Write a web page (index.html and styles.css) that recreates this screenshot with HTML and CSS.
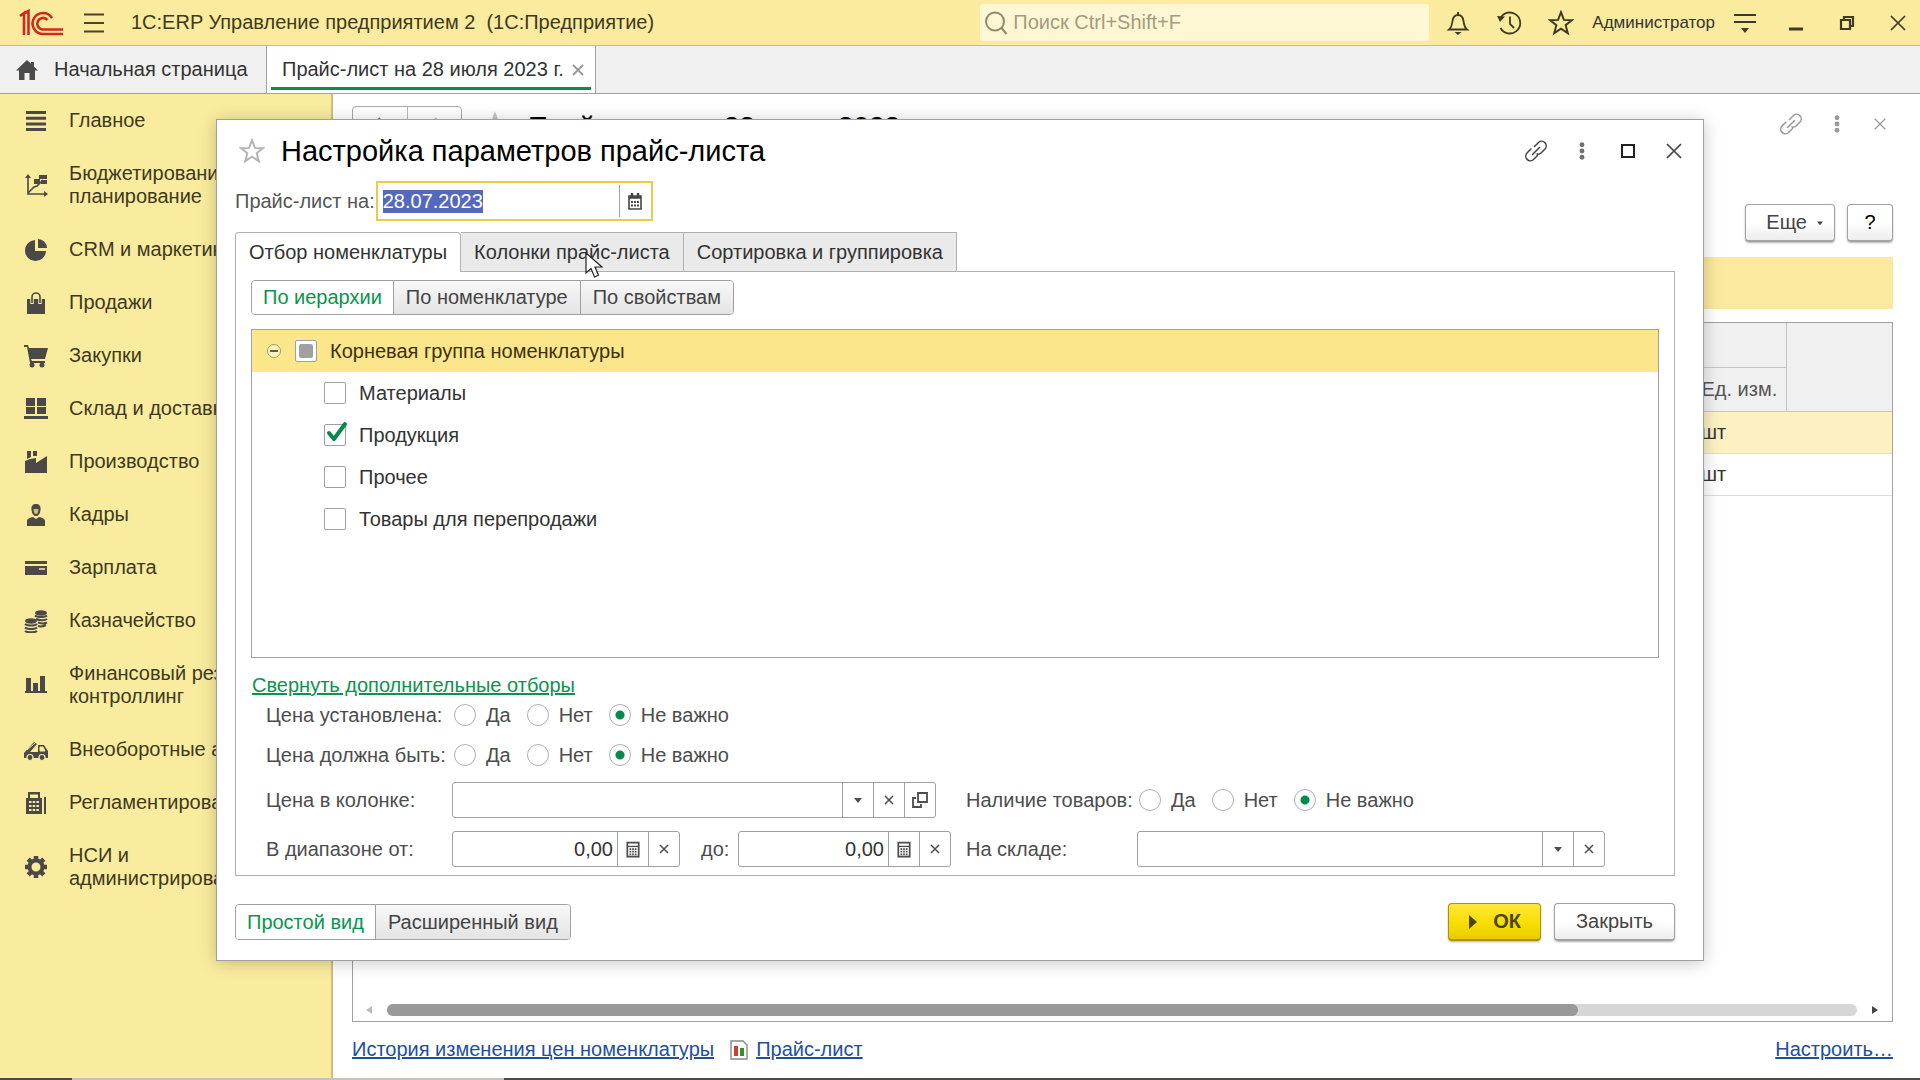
FILE: index.html
```html
<!DOCTYPE html>
<html lang="ru">
<head>
  <meta charset="UTF-8">
  <meta name="viewport" content="width=device-width, initial-scale=1">
  <title>1С:ERP Управление предприятием 2</title>
  <link rel="stylesheet" href="styles.css">
</head>
<body>
  <!-- Общие иконки -->
  <svg class="sprite" aria-hidden="true">
    <symbol id="i-link" viewBox="0 0 24 24"><g fill="none" stroke="currentColor" stroke-width="1.500" stroke-linecap="round"><path d="M10.500 7.500l4-4a4.600 4.600 0 0 1 6.500 6.500l-4 4c-1 1-2.500 1.400-4 1"/><path d="M13.500 16.500l-4 4a4.600 4.600 0 0 1-6.500-6.500l4-4"/><path d="M8.500 15.500l7-7"/></g></symbol>
    <symbol id="i-dots" viewBox="0 0 24 24"><g fill="currentColor"><circle cx="12" cy="4.500" r="2.900"/><circle cx="12" cy="12" r="2.900"/><circle cx="12" cy="19.500" r="2.900"/></g></symbol>
    <symbol id="i-close" viewBox="0 0 24 24"><path d="M5 5l14 14M19 5L5 19" fill="none" stroke="currentColor" stroke-width="1.700"/></symbol>
    <symbol id="i-star" viewBox="0 0 24 24"><path d="M12 2l2.700 7.100 7.300.3-5.700 4.600 2 7.400-6.300-4.200-6.300 4.200 2-7.400L2 9.400l7.300-.3z" fill="none" stroke="currentColor" stroke-width="1.800"/></symbol>
    <symbol id="i-x" viewBox="0 0 16 16"><path d="M4 4l8 8M12 4l-8 8" fill="none" stroke="currentColor" stroke-width="1.500"/></symbol>
    <symbol id="i-down" viewBox="0 0 16 16"><path d="M4 6h8l-4 5z" fill="currentColor"/></symbol>
    <symbol id="i-calc" viewBox="0 0 16 18"><path d="M1.500 1h13v16h-13z" fill="none" stroke="currentColor" stroke-width="2"/><path d="M2 5.500h12" stroke="currentColor" stroke-width="1.500"/><path d="M4 8.500h8M4 11.500h8M4 14.500h8" stroke="currentColor" stroke-width="2" stroke-dasharray="2 1"/></symbol>
  </svg>

  <header class="topbar">
    <svg class="logo" viewBox="0 0 44 28" role="img" aria-label="1С"><g fill="none" stroke="#d3281c"><path d="M1 7l4-3v22M9.500 26V2L5 4.500" stroke-width="2.600"/><path d="M33 9a10.500 10.500 0 1 0-9.500 16H44" stroke-width="2.600"/><path d="M28.500 11a5.800 5.800 0 1 0-5 9.500H44" stroke-width="2.600"/></g></svg>
    <button class="icon-btn" aria-label="Меню"><svg width="24" height="24" viewBox="0 0 24 24"><path d="M2 3.500h20M2 12h20M2 20.500h20" stroke="#4a4326" stroke-width="2"/></svg></button>
    <span class="app-title">1С:ERP Управление предприятием 2&nbsp; (1С:Предприятие)</span>
    <label class="search">
      <svg width="24" height="24" viewBox="0 0 24 24"><g fill="none" stroke="#8f886b" stroke-width="2"><circle cx="11" cy="10.500" r="9"/><path d="M17.500 17l5 6"/></g></svg>
      <input type="search" placeholder="Поиск Ctrl+Shift+F" aria-label="Поиск">
    </label>
    <div class="top-icons">
      <button class="icon-btn" aria-label="Уведомления"><svg width="24" height="24" viewBox="0 0 24 24"><path d="M3 18.500c2.500-2 3-4.500 3.500-8.500C7 6.500 9 4 12 4s5 2.500 5.500 6c.5 4 1 6.500 3.500 8.500z" fill="none" stroke="currentColor" stroke-width="1.800"/><path d="M11 1h2v3h-2zM8.500 21h7L12 24z" fill="currentColor"/></svg></button>
      <button class="icon-btn" aria-label="История"><svg width="26" height="26" viewBox="0 0 26 26"><path d="M4.500 8a10.500 10.500 0 1 1 0 10M14 6.500V14l4 4" fill="none" stroke="currentColor" stroke-width="1.800"/><path d="M1 6l8 .5-5 5.500z" fill="currentColor"/></svg></button>
      <button class="icon-btn" aria-label="Избранное"><svg width="26" height="26"><use href="#i-star"/></svg></button>
    </div>
    <span class="user">Администратор</span>
    <div class="win-icons">
      <button class="icon-btn" aria-label="Настройки"><svg width="24" height="24" viewBox="0 0 24 24"><path d="M1 4h22M1 11h22" stroke="currentColor" stroke-width="2"/><path d="M8 17h8l-4 5z" fill="currentColor"/></svg></button>
      <button class="icon-btn" aria-label="Свернуть"><svg width="24" height="24" viewBox="0 0 24 24"><path d="M5 18h14" stroke="currentColor" stroke-width="3"/></svg></button>
      <button class="icon-btn" aria-label="Восстановить"><svg width="24" height="24" viewBox="0 0 24 24"><path d="M9 9V6h9v9h-3M6 9h9v9H6z" fill="none" stroke="currentColor" stroke-width="2.200"/></svg></button>
      <button class="icon-btn" aria-label="Закрыть"><svg width="24" height="24"><use href="#i-close"/></svg></button>
    </div>
  </header>

  <nav class="tabs">
    <a href="#" class="tab home"><svg width="22" height="20" viewBox="0 0 22 20"><path d="M11 0l4 3.700V2h3v4.500l4 4h-3V20h-5.500v-7h-5v7H3v-9.500H0z" fill="#4a4a4a"/></svg>Начальная страница</a>
    <a href="#" class="tab current">Прайс-лист на 28 июля 2023 г.<svg width="20" height="20"><use href="#i-x"/></svg></a>
  </nav>

  <div class="workspace">
    <nav class="sidebar">
      <a href="#"><svg viewBox="0 0 24 24"><path d="M2 3.500h20M2 9.200h20M2 14.900h20M2 20.600h20" stroke="currentColor" stroke-width="3"/></svg><span>Главное</span></a>
      <a href="#"><svg viewBox="0 0 24 24"><path d="M4 3v18h18M4 20l6-6 3-1 6-6" fill="none" stroke="currentColor" stroke-width="1.600"/><path d="M1 5l3-4 3 4zM20 18l4 3-4 3zM10 6h6v5h-6zM15 2h8v4h-8zM17 7h6v4h-6z" fill="currentColor"/></svg><span>Бюджетирование и планирование</span></a>
      <a href="#"><svg viewBox="0 0 24 24"><path d="M11 2v11h11A10.500 10.500 0 1 1 11 2z" fill="currentColor"/><path d="M14 1a9 9 0 0 1 9 9h-9z" fill="currentColor"/></svg><span>CRM и маркетинг</span></a>
      <a href="#"><svg viewBox="0 0 24 24"><path d="M3 8h18v15H3z" fill="currentColor"/><path d="M8 13V6a4 4 0 0 1 8 0v7" fill="none" stroke="#faec9e" stroke-width="3.500"/><path d="M8 12V6a4 4 0 0 1 8 0v6" fill="none" stroke="currentColor" stroke-width="1.600"/></svg><span>Продажи</span></a>
      <a href="#"><svg viewBox="0 0 24 24"><path d="M0 1h4l1 3h19l-3 11H7l1 2h13v2H6L3 3H0z" fill="currentColor"/><circle cx="8" cy="21" r="2.500" fill="currentColor"/><circle cx="18" cy="21" r="2.500" fill="currentColor"/></svg><span>Закупки</span></a>
      <a href="#"><svg viewBox="0 0 24 24"><path d="M2 1h9v8H2zM13 1h9v8h-9zM2 10h9v7H2zM13 10h9v7h-9zM0 19h24v3H0z" fill="currentColor"/></svg><span>Склад и доставка</span></a>
      <a href="#"><svg viewBox="0 0 24 24"><path d="M1 23V11l5-2 6-1v5l11-7v17zM3 1h4v6l-4 2zM9 1h4v5H9z" fill="currentColor"/></svg><span>Производство</span></a>
      <a href="#"><svg viewBox="0 0 24 24"><path d="M12 1c4 0 5 3 4.500 6-.5 4-2 6-4.500 6s-4-2-4.500-6C7 4 8 1 12 1zM3 23v-5c0-2 3-3.500 6-4l3 2 3-2c3 .5 6 2 6 4v5z" fill="currentColor"/><path d="M9.500 6h5c0 3-1 5-2.500 5s-2.500-2-2.500-5z" fill="#c9bd83"/></svg><span>Кадры</span></a>
      <a href="#"><svg viewBox="0 0 24 24"><path d="M1 5h22v3H1zM1 10h22v9H1z" fill="currentColor"/><path d="M15 13h6" stroke="#faec9e" stroke-width="1.500"/></svg><span>Зарплата</span></a>
      <a href="#"><svg viewBox="0 0 24 24"><g fill="currentColor"><ellipse cx="17" cy="4" rx="6" ry="2.700"/><ellipse cx="7" cy="12" rx="6" ry="2.700"/></g><g fill="none" stroke="currentColor" stroke-width="2"><path d="M11 6.500c2 2 10 2 12 0M12 10c3 1.500 9 1.500 11 0M14 13.500c3 1 7 1 9 0M14 17c3 1 6 0 8-1M1 15c2 2 10 2 12 0M1 18.500c2 2 10 2 12 0M1 22c2 1.700 10 1.700 12 0"/></g></svg><span>Казначейство</span></a>
      <a href="#"><svg viewBox="0 0 24 24"><path d="M2 5h5v14H2zM9 10h5v9H9zM16 3h5v16h-5zM1 18h22v2H1z" fill="currentColor"/></svg><span>Финансовый результат и контроллинг</span></a>
      <a href="#"><svg viewBox="0 0 24 24"><path d="M0 15L10 4l3 2-7 8h8V7h6l4 6v7H0z" fill="currentColor"/><path d="M16 9h3l2 4h-5zM3 12l8-7" fill="#faec9e" stroke="#faec9e"/><g fill="currentColor" stroke="#faec9e" stroke-width="1.200"><circle cx="6" cy="19.500" r="3"/><circle cx="18" cy="19.500" r="3"/></g></svg><span>Внеоборотные активы</span></a>
      <a href="#"><svg viewBox="0 0 24 24"><path d="M4 1h12v6h2v16H2V7h2zM20 6h2v17h-2z" fill="currentColor"/><path d="M6 3.500h8V7H6z" fill="#faec9e"/><path d="M5 11h10M5 15h10M5 19h10" stroke="#faec9e" stroke-width="2" stroke-dasharray="2.500 1.200"/></svg><span>Регламентированный учет</span></a>
      <a href="#"><svg viewBox="0 0 24 24"><circle cx="12" cy="12" r="6.500" fill="none" stroke="currentColor" stroke-width="4"/><path d="M12 1v4M12 19v4M1 12h4M19 12h4M4.200 4.200l3 3M16.800 16.800l3 3M4.200 19.800l3-3M16.800 7.200l3-3" stroke="currentColor" stroke-width="4.500"/></svg><span>НСИ и<br>администрирование</span></a>
    </nav>

    <main class="page">
      <div class="page-head">
        <div class="nav-buttons">
          <button aria-label="Назад"><svg width="18" height="18" viewBox="0 0 18 18"><path d="M9 3L3 9l6 6M3 9h13" fill="none" stroke="#777" stroke-width="2"/></svg></button>
          <button aria-label="Вперед"><svg width="18" height="18" viewBox="0 0 18 18"><path d="M9 3l6 6-6 6M15 9H2" fill="none" stroke="#bbb" stroke-width="2"/></svg></button>
        </div>
        <svg class="head-star" width="28" height="28" viewBox="0 0 24 24"><path d="M12 1l3 8 8 .4-6 5 2 8-7-4.500-7 4.500 2-8-6-5L9 9z" fill="#c4c4c4"/></svg>
        <h1>Прайс-лист на 28 июля 2023</h1>
        <div class="head-tools">
          <svg width="24" height="24"><use href="#i-link"/></svg>
          <svg width="20" height="20"><use href="#i-dots"/></svg>
          <svg width="18" height="18"><use href="#i-close"/></svg>
        </div>
      </div>
      <div class="commands">
        <button class="btn more">Еще<svg width="12" height="12"><use href="#i-down"/></svg></button>
        <button class="btn help">?</button>
      </div>
      <div class="notice"></div>
      <div class="list">
        <table>
          <thead>
            <tr><th class="wide"></th><th class="unit"></th><th class="rest" rowspan="2"></th></tr>
            <tr><th></th><th>Ед. изм.</th></tr>
          </thead>
          <tbody>
            <tr class="selected"><td></td><td>шт</td><td></td></tr>
            <tr><td></td><td>шт</td><td></td></tr>
          </tbody>
        </table>
        <div class="scroll">
          <svg width="10" height="10" viewBox="0 0 10 10"><path d="M8 1v8L2 5z" fill="#bbb"/></svg>
          <div class="track"><div class="thumb"></div></div>
          <svg width="10" height="10" viewBox="0 0 10 10"><path d="M2 1v8l6-4z" fill="#444"/></svg>
        </div>
      </div>
      <footer class="links">
        <a href="#">История изменения цен номенклатуры</a>
        <svg width="18" height="20" viewBox="0 0 18 20"><path d="M1 1h12l4 4v14H1z" fill="#fff" stroke="#888" stroke-width="1.400"/><path d="M4 6h4v10H4z" fill="#d23b30"/><path d="M10 8h4v8h-4z" fill="#3d8a2c"/></svg>
        <a href="#">Прайс-лист</a>
        <a href="#" class="setup">Настроить…</a>
      </footer>
    </main>
  </div>
  <div class="edge"><div></div></div>

  <!-- Окно настройки -->
  <form class="dialog" role="dialog" aria-labelledby="dlgTitle">
    <div class="dialog-head">
      <svg class="star" width="26" height="26"><use href="#i-star"/></svg>
      <h2 id="dlgTitle">Настройка параметров прайс-листа</h2>
      <div class="dialog-tools">
        <button type="button" class="icon-btn" aria-label="Ссылка"><svg width="24" height="24"><use href="#i-link"/></svg></button>
        <button type="button" class="icon-btn dots" aria-label="Ещё"><svg width="20" height="20"><use href="#i-dots"/></svg></button>
        <button type="button" class="icon-btn" aria-label="Развернуть"><svg width="14" height="14" viewBox="0 0 14 14"><path d="M1 1h12v12H1z" fill="none" stroke="#222" stroke-width="2"/></svg></button>
        <button type="button" class="icon-btn" aria-label="Закрыть"><svg width="24" height="24"><use href="#i-close"/></svg></button>
      </div>
    </div>

    <div class="date-row">
      <label for="date">Прайс-лист на:</label>
      <div class="date-field">
        <input type="text" id="date" value="28.07.2023" autofocus>
        <button type="button" aria-label="Календарь"><svg width="14" height="17" viewBox="0 0 14 17"><path d="M1 3h12v13H1z" fill="none" stroke="#444" stroke-width="1.600"/><path d="M1 4.500h12M4 0v4M10 0v4" stroke="#444" stroke-width="2.400"/><path d="M3 9h8M3 12.500h8" stroke="#444" stroke-width="2" stroke-dasharray="2 1"/></svg></button>
      </div>
    </div>

    <div class="dialog-tabs" role="tablist">
      <button type="button" role="tab" class="active">Отбор номенклатуры</button>
      <button type="button" role="tab">Колонки прайс-листа</button>
      <button type="button" role="tab">Сортировка и группировка</button>
    </div>

    <div class="panel">
      <div class="switch">
        <button type="button" class="active">По иерархии</button>
        <button type="button">По номенклатуре</button>
        <button type="button">По свойствам</button>
      </div>

      <div class="tree">
        <div class="tree-row root">
          <button type="button" class="expander" aria-label="Свернуть группу"></button>
          <label><input type="checkbox" id="rootGroup">Корневая группа номенклатуры</label>
        </div>
        <div class="tree-row"><label><input type="checkbox">Материалы</label></div>
        <div class="tree-row"><label><input type="checkbox" checked>Продукция</label></div>
        <div class="tree-row"><label><input type="checkbox">Прочее</label></div>
        <div class="tree-row"><label><input type="checkbox">Товары для перепродажи</label></div>
      </div>

      <a href="#" class="collapse">Свернуть дополнительные отборы</a>

      <div class="filters">
        <div class="line radios">
          <span class="caption">Цена установлена:</span>
          <label><input type="radio" name="priceSet">Да</label>
          <label><input type="radio" name="priceSet">Нет</label>
          <label><input type="radio" name="priceSet" checked>Не важно</label>
        </div>
        <div class="line radios">
          <span class="caption">Цена должна быть:</span>
          <label><input type="radio" name="priceMust">Да</label>
          <label><input type="radio" name="priceMust">Нет</label>
          <label><input type="radio" name="priceMust" checked>Не важно</label>
        </div>
        <div class="pair">
          <div class="line">
            <label class="caption" for="column">Цена в колонке:</label>
            <div class="field column">
              <div class="select"><select id="column"><option></option></select><svg width="16" height="16"><use href="#i-down"/></svg></div>
              <button type="button" aria-label="Очистить"><svg width="16" height="16"><use href="#i-x"/></svg></button>
              <button type="button" aria-label="Открыть"><svg width="16" height="16" viewBox="0 0 16 16"><path d="M6 1h9v9H6zM4 6H1v9h8v-3" fill="none" stroke="currentColor" stroke-width="1.800"/></svg></button>
            </div>
          </div>
          <div class="line radios">
            <span class="caption">Наличие товаров:</span>
            <label><input type="radio" name="stock">Да</label>
            <label><input type="radio" name="stock">Нет</label>
            <label><input type="radio" name="stock" checked>Не важно</label>
          </div>
        </div>
        <div class="pair">
          <div class="line">
            <label class="caption" for="from">В диапазоне от:</label>
            <div class="field from">
              <input type="text" id="from" value="0,00">
              <button type="button" aria-label="Калькулятор"><svg width="14" height="17"><use href="#i-calc"/></svg></button>
              <button type="button" aria-label="Очистить"><svg width="16" height="16"><use href="#i-x"/></svg></button>
            </div>
            <label class="to-label" for="to">до:</label>
            <div class="field to">
              <input type="text" id="to" value="0,00">
              <button type="button" aria-label="Калькулятор"><svg width="14" height="17"><use href="#i-calc"/></svg></button>
              <button type="button" aria-label="Очистить"><svg width="16" height="16"><use href="#i-x"/></svg></button>
            </div>
          </div>
          <div class="line">
            <label class="caption" for="store">На складе:</label>
            <div class="field store">
              <div class="select"><select id="store"><option></option></select><svg width="16" height="16"><use href="#i-down"/></svg></div>
              <button type="button" aria-label="Очистить"><svg width="16" height="16"><use href="#i-x"/></svg></button>
            </div>
          </div>
        </div>
      </div>
    </div>

    <div class="dialog-foot">
      <div class="switch">
        <button type="button" class="active">Простой вид</button>
        <button type="button">Расширенный вид</button>
      </div>
      <div class="actions">
        <button type="submit" class="btn ok"><svg width="10" height="16" viewBox="0 0 10 16"><path d="M1 1l8 7-8 7z" fill="#4d4500"/></svg>ОК</button>
        <button type="button" class="btn">Закрыть</button>
      </div>
    </div>
  </form>

  <svg class="cursor" width="20" height="27" viewBox="0 0 20 27"><path d="M1 1v20l5-4.500 3.500 8.500 4-1.700-3.500-8.300h7z" fill="#fff" stroke="#222" stroke-width="1.200"/></svg>

  <script>
    document.getElementById('rootGroup').indeterminate = true;
    const dateInput = document.getElementById('date');
    dateInput.focus();
    dateInput.select();
  </script>
</body>
</html>
```
FILE: styles.css
```css
* {
  box-sizing: border-box;
}
body {
  margin: 0;
  min-height: 100vh;
  display: flex;
  flex-direction: column;
  position: relative;
  background: #fff;
  color: #333;
  font: 20px/23px "Liberation Sans", Arial, sans-serif;
}
button, input, select {
  font: inherit;
  color: inherit;
  margin: 0;
}
button {
  padding: 0;
  border: 0;
  background: none;
}
a {
  color: inherit;
}
svg {
  display: block;
  flex: none;
}
.sprite {
  position: absolute;
  width: 0;
  height: 0;
}
.icon-btn {
  display: flex;
  align-items: center;
  justify-content: center;
  color: #3f3a22;
}

/* Верхняя панель */
.topbar {
  display: flex;
  align-items: center;
  height: 46px;
  padding: 0 10px 0 19px;
  background: #fbeb9e;
  border-bottom: 1px solid #c9bc78;
}
.logo {
  width: 44px;
  height: 28px;
  margin-right: 19px;
}
.app-title {
  margin-left: 25px;
  color: #40391d;
  white-space: nowrap;
}
.search {
  display: flex;
  align-items: center;
  gap: 5px;
  width: 449px;
  height: 37px;
  margin-left: auto;
  padding-left: 4px;
  background: #fff7d3;
  border-radius: 3px;
}
.search input {
  flex: 1;
  min-width: 0;
  border: 0;
  padding: 0;
  outline: 0;
  background: none;
}
.search input::placeholder {
  color: #a39c7f;
}
.top-icons {
  display: flex;
  gap: 26px;
  margin: 0 18px 0 17px;
}
.user {
  font-size: 17px;
}
.win-icons {
  display: flex;
  gap: 27px;
  margin-left: 18px;
}

/* Вкладки */
.tabs {
  display: flex;
  height: 48px;
  background: #f0f0f0;
  border-bottom: 1px solid #a0a0a0;
}
.tab {
  display: flex;
  align-items: center;
  text-decoration: none;
}
.home {
  gap: 16px;
  width: 266px;
  padding-left: 16px;
}
.current {
  position: relative;
  gap: 4px;
  padding: 0 7px 0 15px;
  background: #fff;
  border: solid #a0a0a0;
  border-width: 0 1px;
}
.current svg {
  color: #999;
}
.current::after {
  content: "";
  position: absolute;
  left: 4px;
  right: 4px;
  bottom: 3px;
  height: 3px;
  background: #12894a;
}

/* Разделы */
.workspace {
  flex: 1;
  display: flex;
}
.sidebar {
  width: 333px;
  flex: none;
  background: #faec9e;
  border-right: 2px solid #cdbf80;
}
.sidebar a {
  display: flex;
  align-items: center;
  gap: 21px;
  padding: 15px 0 15px 24px;
  color: #40391d;
  text-decoration: none;
}
.sidebar svg {
  width: 24px;
  height: 24px;
  margin: -1px 0;
  color: #4d4848;
}

/* Страница под окном */
.page {
  flex: 1;
  min-width: 0;
  display: flex;
  flex-direction: column;
  padding: 12px 27px 17px 19px;
}
.page-head {
  display: flex;
  align-items: center;
  height: 36px;
}
.nav-buttons {
  display: flex;
  height: 36px;
  border: 1px solid #aaa;
  border-radius: 4px;
}
.nav-buttons button {
  display: flex;
  align-items: center;
  justify-content: center;
  width: 54px;
}
.nav-buttons button + button {
  border-left: 1px solid #bbb;
}
.head-star {
  margin: 0 19px 0 19px;
}
h1, h2 {
  margin: 0;
  font-size: 29px;
  font-weight: normal;
  line-height: 32px;
  color: #000;
}
h1 {
  padding-top: 5px;
  font-size: 28px;
}
.head-tools {
  display: flex;
  align-items: center;
  gap: 24px;
  margin-left: auto;
  padding-right: 4px;
  color: #999;
}
.btn {
  height: 38px;
  padding: 0 21px;
  border: 1px solid #a3a3a3;
  border-bottom-width: 2px;
  border-radius: 4px;
  background: linear-gradient(#fff 50%, #ededed);
  box-shadow: 0 1px 2px rgba(0, 0, 0, .3);
  color: #444;
}
.commands {
  display: flex;
  justify-content: flex-end;
  gap: 12px;
  margin-top: 62px;
}
.more {
  display: flex;
  align-items: center;
  gap: 7px;
  padding: 0 8px 0 20px;
}
.help {
  width: 46px;
  padding: 0;
  color: #000;
}
.notice {
  height: 52px;
  margin-top: 15px;
  background: #fbe99f;
}
.list {
  flex: 1;
  display: flex;
  flex-direction: column;
  justify-content: space-between;
  margin-top: 13px;
  border: 1px solid #a0a0a0;
}
table {
  width: 100%;
  table-layout: fixed;
  border-collapse: collapse;
}
th, td {
  height: 42px;
  padding: 0;
  text-align: left;
  font-weight: normal;
  border-bottom: 1px solid #ddd;
}
th {
  height: 44px;
  color: #555;
  background: #f0f0f0;
  border: 1px solid #c4c4c4;
  border-top: 0;
}
th:first-child {
  border-left: 0;
}
td + td {
  color: #3c2f2f;
}
.unit {
  width: 85px;
}
.rest {
  width: 106px;
  border-right: 0;
}
.selected {
  background: #fcf1c3;
}
.scroll {
  display: flex;
  align-items: center;
  padding: 0 12px 5px 11px;
  gap: 13px;
}
.track {
  flex: 1;
  height: 12px;
  border-radius: 6px;
  background: #d6d6d6;
}
.thumb {
  width: 81%;
  height: 12px;
  border-radius: 6px;
  background: #999;
}
.links {
  display: flex;
  align-items: center;
  gap: 16px;
  margin-top: 16px;
  color: #1d4fa3;
}
.links svg + a {
  margin-left: -8px;
}
.setup {
  margin-left: auto;
}
.edge {
  height: 2px;
  background: #4a4a46;
}
.edge div {
  width: 432px;
  height: 2px;
  margin-left: 72px;
  background: #c4c4bc;
}

/* Окно настройки */
.dialog {
  position: absolute;
  top: 119px;
  left: 216px;
  right: 216px;
  padding: 11px 28px 19px 18px;
  background: #fff;
  border: 1px solid #a0a0a0;
  box-shadow: 0 2px 16px rgba(0, 0, 0, .22);
}
.dialog-head {
  display: flex;
  align-items: center;
  height: 40px;
}
.star {
  margin: 0 16px 0 4px;
  color: #b4b4b4;
}
.dialog-tools {
  display: flex;
  gap: 23px;
  margin-right: -10px;
  margin-left: auto;
}
.dialog-tools .icon-btn {
  width: 23px;
  color: #444;
}
.dialog-tools .dots {
  color: #707070;
}
.date-row {
  display: flex;
  align-items: center;
  gap: 1px;
  height: 40px;
  margin-top: 10px;
  color: #555;
}
.date-field {
  display: flex;
  width: 277px;
  height: 40px;
  padding: 2px 0;
  border: 2px solid #ecca44;
}
.date-field input {
  flex: 1;
  min-width: 0;
  padding: 0 5px;
  border: 0;
  border-right: 1px solid #a0a0a0;
  outline: 0;
}
.date-field input::selection {
  background: #5468bd;
  color: #fff;
}
.date-field button {
  display: flex;
  align-items: center;
  justify-content: center;
  width: 31px;
}
.dialog-tabs {
  display: flex;
  margin-top: 11px;
}
.dialog-tabs button {
  height: 39px;
  padding: 0 13px;
  border: 1px solid #b0b0b0;
  border-bottom: 0;
  background: #eaeaea;
}
.dialog-tabs button + button {
  border-left: 0;
}
.dialog-tabs .active {
  position: relative;
  height: 40px;
  margin-bottom: -1px;
  background: #fff;
  border-radius: 4px 4px 0 0;
}
.panel {
  padding: 8px 15px;
  border: 1px solid #b0b0b0;
}
.switch {
  display: inline-flex;
  height: 35px;
  border: 1px solid #a0a0a0;
  border-radius: 4px;
  overflow: hidden;
}
.switch button {
  padding: 0 12px;
  background: linear-gradient(#f8f8f8, #e4e4e4);
  color: #444;
}
.switch button + button {
  border-left: 1px solid #a0a0a0;
}
.switch .active {
  padding: 0 11px;
  background: #fff;
  color: #0a9450;
}
.tree {
  min-height: 329px;
  margin-top: 14px;
  border: 1px solid #a0a0a0;
}
.tree-row {
  display: flex;
  align-items: center;
  height: 42px;
  padding-left: 72px;
}
.tree-row label {
  display: flex;
  align-items: center;
  gap: 13px;
}
.root {
  gap: 14px;
  padding-left: 15px;
  background: #fbe68c;
  color: #40300f;
}
.expander {
  width: 14px;
  height: 14px;
  border: 1px solid #a99a5c;
  border-radius: 50%;
  background: linear-gradient(#6b5c2b, #6b5c2b) center/8px 2px no-repeat #fdf3c4;
}
input[type="checkbox"] {
  appearance: none;
  position: relative;
  width: 22px;
  height: 22px;
  border: 1px solid #a0a0a0;
  border-radius: 2px;
  background: #fff;
}
input[type="checkbox"]:indeterminate::after {
  content: "";
  position: absolute;
  inset: 3px;
  border-radius: 2px;
  background: #a0a0a0;
}
/* Галочка немного выходит за рамку */
input[type="checkbox"]:checked::after {
  content: "";
  position: absolute;
  left: 1px;
  top: -4px;
  width: 22px;
  height: 22px;
  background: url("data:image/svg+xml,%3Csvg xmlns='http://www.w3.org/2000/svg' viewBox='0 0 22 22'%3E%3Cpath d='M3 12l5 6L19 3' fill='none' stroke='%23048a4a' stroke-width='4' stroke-linecap='round' stroke-linejoin='round'/%3E%3C/svg%3E");
}
.collapse {
  display: block;
  width: fit-content;
  margin: 16px 0 0 1px;
  color: #0a9450;
}
.filters {
  padding-left: 15px;
  color: #4d4d4d;
}
.line {
  display: flex;
  align-items: center;
  height: 36px;
}
.line + .line {
  margin-top: 4px;
}
.pair {
  display: grid;
  grid-template-columns: 700px 1fr;
  margin-top: 9px;
}
.pair + .pair {
  margin-top: 13px;
}
.pair .line {
  margin: 0;
}
.caption {
  width: 186px;
  flex: none;
}
.pair .line + .line .caption {
  width: 171px;
}
.radios label {
  display: flex;
  align-items: center;
  gap: 10px;
  margin: 0 14px 0 2px;
}
input[type="radio"] {
  appearance: none;
  width: 22px;
  height: 22px;
  border: 1px solid #b0b0b0;
  border-radius: 50%;
  background: #fff;
}
input[type="radio"]:checked {
  background: radial-gradient(circle, #048a4a 4px, #fff 5px);
}
.field {
  display: flex;
  height: 36px;
  border: 1px solid #a0a0a0;
  border-radius: 3px;
}
.field input {
  flex: 1;
  min-width: 0;
  padding: 0 4px;
  border: 0;
  background: none;
  text-align: right;
  color: #333;
}
.field button {
  display: flex;
  align-items: center;
  justify-content: center;
  width: 31px;
  border-left: 1px solid #a0a0a0;
}
.select {
  position: relative;
  flex: 1;
}
.select select {
  appearance: none;
  width: 100%;
  height: 100%;
  padding: 0 38px 0 5px;
  border: 0;
  background: none;
}
.select svg {
  position: absolute;
  top: 0;
  right: 0;
  width: 31px;
  height: 100%;
  padding: 0 7px;
  border-left: 1px solid #a0a0a0;
  pointer-events: none;
}
.column {
  width: 484px;
}
.from {
  width: 228px;
}
.to {
  width: 213px;
}
.to-label {
  width: 37px;
  margin-left: 21px;
}
.store {
  width: 468px;
}
.dialog-foot {
  display: flex;
  align-items: center;
  justify-content: space-between;
  margin-top: 27px;
}
.dialog-foot .switch {
  height: 36px;
}
.actions {
  display: flex;
  gap: 13px;
}
.ok {
  display: flex;
  align-items: center;
  gap: 15px;
  padding: 0 19px;
  border-color: #a89400;
  background: linear-gradient(#ffe83a, #f7dc00 60%, #e9cb00);
  color: #4d4500;
  font-weight: bold;
}
.cursor {
  position: absolute;
  left: 585px;
  top: 252px;
}
```
